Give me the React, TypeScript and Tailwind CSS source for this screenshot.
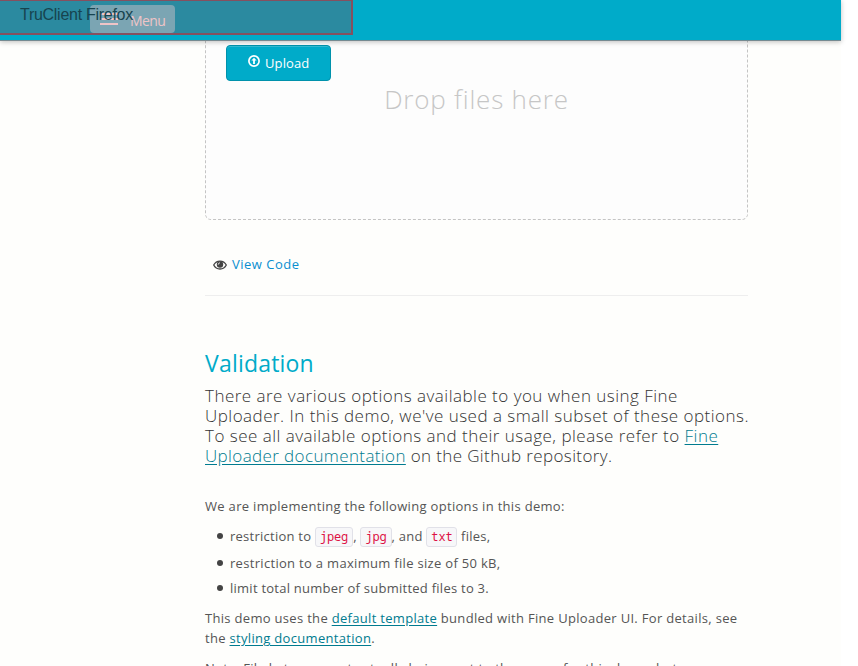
import React from "react";

const codeClass =
  "inline-block h-5 rounded-[3px] border border-[#e1e1e8] bg-[#f7f7f9] px-1 align-[0px] font-['Noto_Sans_Mono','DejaVu_Sans_Mono',monospace] text-[12px] leading-[18px] tracking-[-0.15px] text-[#dd1144]";
const linkClass = "text-[#007b8f] underline underline-offset-2";

function Header() {
  return (
    <header className="relative z-10 h-[41px] w-[841px] shrink-0 border-b border-[#758a91] bg-[#00abc9] shadow-[0_1px_5px_rgba(0,0,0,0.25)]">
      <button className="absolute left-[90px] top-[5px] flex h-7 w-[85px] items-center rounded bg-[#7ba5b3] pl-[10px] text-[#efc4c7]">
        <span className="flex w-[18px] flex-col gap-[3px]">
          <span className="h-[2px] bg-[#efc4c7]" />
          <span className="h-[2px] bg-[#efc4c7]" />
          <span className="h-[2px] bg-[#efc4c7]" />
        </span>
        <span className="ml-3 mt-[2px] text-[14px] tracking-[-0.6px]">Menu</span>
      </button>
      <div className="absolute left-0 top-0 -z-10 h-[35px] w-[353px] border-b-2 border-r-2 border-t border-[#85505f] bg-[#2b8aa0]" />
      <div className="absolute left-5 top-[5px] whitespace-nowrap font-['Liberation_Sans',Arial,sans-serif] text-[16px] leading-[19px] tracking-[-0.28px] text-[#17444f]">
        TruClient Firefox
      </div>
    </header>
  );
}

function Uploader() {
  return (
    <section className="-mt-2 h-[187px] rounded-b-[6px] border border-t-0 border-dashed border-[#c4c4c4] bg-[#fdfdfd] px-5 pt-3">
      <button className="flex h-9 w-[105px] items-center rounded-[4px] border border-[#0092ac] bg-[#00abc9] pl-[21px] text-white shadow-[inset_0_1px_0_rgba(255,255,255,0.2)]">
        <svg width="12" height="12" viewBox="0 0 12 12" className="-mt-1" fill="none">
          <circle cx="6" cy="6" r="5.1" stroke="white" strokeWidth="1.7" />
          <path d="M6 2.7 3.4 5.5H5.1V9h1.8V5.5h1.7Z" fill="white" />
        </svg>
        <span className="ml-[5px] mt-px text-[13px] tracking-[0.1px]">Upload</span>
      </button>
      <div className="mt-[2px] text-center text-[26px] font-light leading-8 tracking-[0.8px] text-[#c6c6c6]">
        Drop files here
      </div>
    </section>
  );
}

export default function App() {
  return (
    <div className="h-[666px] w-full overflow-hidden bg-white font-['Open_Sans','Noto_Sans',sans-serif] text-[#444444]">
      <div className="flex h-full w-[841px] flex-col bg-[#fefefc]">
        <Header />
        <main className="ml-[205px] w-[543px] whitespace-nowrap">
          <Uploader />
          <div className="mt-[35px] flex h-5 items-center pl-2 text-[14px]">
            <svg width="14" height="10" viewBox="0 0 14 10" fill="none">
              <path d="M.7 5C3.4-.3 10.6-.3 13.3 5 10.6 10.3 3.4 10.3.7 5Z" stroke="#444" strokeWidth="1.3" />
              <circle cx="7" cy="4.5" r="3.2" fill="#444" />
              <path d="M5.2 4.7Q5.3 2.8 7 2.8" stroke="#fff" strokeWidth=".8" />
            </svg>
            <a className="ml-[5px] text-[13px] tracking-[0.5px] text-[#0a8fd0]">View Code</a>
          </div>
          <hr className="mt-5 border-[#eeeeee]" />
          <h2 className="mt-[49px] text-[23px] leading-9 tracking-[0.2px] text-[#00abc9]">Validation</h2>
          <div className="mt-[5px] text-[17px] font-light leading-5 tracking-[0.48px] text-[#333333]">
            <div>There are various options available to you when using Fine</div>
            <div>Uploader. In this demo, we've used a small subset of these options.</div>
            <div>To see all available options and their usage, please refer to <a className={linkClass}>Fine</a></div>
            <div className="tracking-[0.38px]"><a className={linkClass}>Uploader documentation</a> on the Github repository.</div>
          </div>
          <div className="text-[13px] leading-5 tracking-[0.31px] text-[#555555]">
            <p className="mt-[30px]">We are implementing the following options in this demo:</p>
            <ul className="mt-[10px] list-none pl-[25px]">
              {[0, 1, 2].map((i) => (
                <li key={i} className={i === 0 ? "flex h-[27px]" : i === 1 ? "flex h-[25px]" : "flex h-5"}>
                  <span className="-ml-[13px] mr-[7px] mt-[7px] size-[6px] shrink-0 rounded-full bg-[#444]" />
                  {i === 0 && (
                    <span className="tracking-[0.25px]">
                      restriction to <code className={codeClass}>jpeg</code>, <code className={codeClass}>jpg</code>, and <code className={codeClass}>txt</code> files,
                    </span>
                  )}
                  {i === 1 && <span>restriction to a maximum file size of 50 kB,</span>}
                  {i === 2 && <span className="tracking-[0.25px]">limit total number of submitted files to 3.</span>}
                </li>
              ))}
            </ul>
            <div className="mt-[10px]">
              <div>This demo uses the <a className={linkClass}>default template</a> bundled with Fine Uploader UI. For details, see</div>
              <div>the <a className={linkClass}>styling documentation</a>.</div>
            </div>
            <div className="mt-[10px]">Note: File bytes are not actually being sent to the server for this demo, but</div>
          </div>
        </main>
      </div>
    </div>
  );
}
